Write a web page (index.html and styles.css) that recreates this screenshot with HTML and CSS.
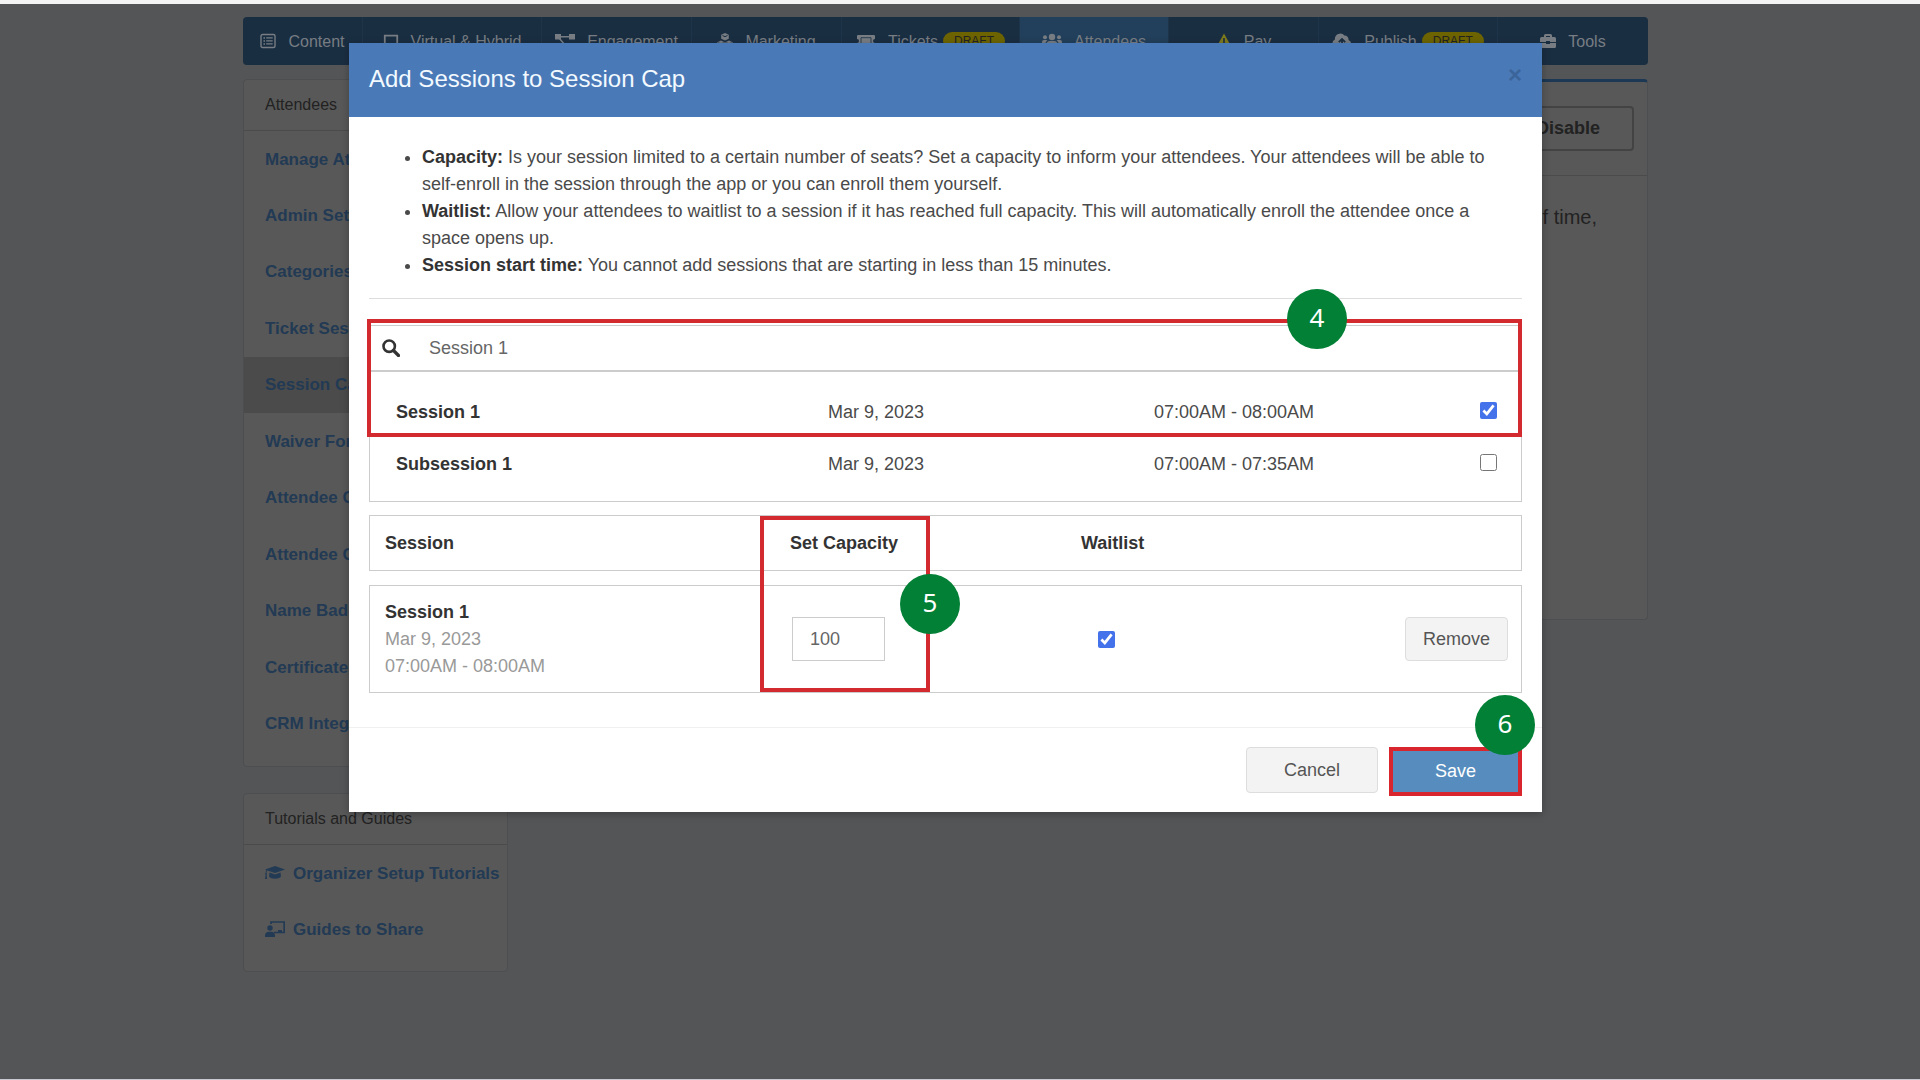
FILE: index.html
```html
<!DOCTYPE html>
<html lang="en">
<head>
<meta charset="utf-8">
<meta name="viewport" content="width=device-width, initial-scale=1">
<title>Session Cap</title>
<link rel="stylesheet" href="styles.css">
</head>
<body>
<div class="page">
  <nav class="topnav" aria-label="Event">
    <a href="#"><svg class="icon" viewBox="0 0 16 16"><rect x="1" y="1.500" width="14" height="13" rx="1.500" fill="none" stroke="currentColor" stroke-width="1.400"/><path d="M3.500 4.200h1.500v1.500H3.500zM3.500 7.200h1.500v1.500H3.500zM3.500 10.200h1.500v1.500H3.500zM6.200 4.200h6.500v1.400H6.200zM6.200 7.200h6.500v1.400H6.200zM6.200 10.200h6.500v1.400H6.200z" fill="currentColor"/></svg>Content</a>
    <a href="#"><svg class="icon" viewBox="0 0 18 16"><path d="M2 12V2h14v10" fill="none" stroke="currentColor" stroke-width="2"/><path d="M0 12.500h18v1a1.500 1.500 0 0 1-1.500 1.500h-15A1.500 1.500 0 0 1 0 13.500z" fill="currentColor"/></svg>Virtual &amp; Hybrid</a>
    <a href="#"><svg class="icon wide" viewBox="0 0 20 16"><path d="M0 1h6v5.500H0zM14 1h6v5.500h-6zM8 10h6v5.500H8z" fill="currentColor"/><path d="M5 3.700h10M4 5l6 7" stroke="currentColor" stroke-width="1.600"/></svg>Engagement</a>
    <a href="#"><svg class="icon" viewBox="0 0 16 16"><path d="M8 0l3.800 1.800v4L8 7.600 4.200 5.800v-4zM4 7.400l3.700 1.800v4L4 15.200.3 13.200v-4zM12 7.400l3.700 1.800v4l-3.700 2-3.700-2v-4z" fill="currentColor"/><path d="M5.500 2.500L8 3.700l2.500-1.200M1.500 9.800L4 11l2.500-1.200M9.500 9.800L12 11l2.500-1.200" fill="none" stroke="#1a2e42"/></svg>Marketing</a>
    <a href="#"><svg class="icon wide" viewBox="0 0 18 16"><path d="M1 2h16a1 1 0 0 1 1 1v3a2 2 0 0 0 0 4v3a1 1 0 0 1-1 1H1a1 1 0 0 1-1-1v-3a2 2 0 0 0 0-4V3a1 1 0 0 1 1-1z" fill="currentColor"/><path d="M4 4.700h10v6.600H4z" fill="none" stroke="#1a2e42" stroke-width=".8"/></svg>Tickets <span class="draft">DRAFT</span></a>
    <a href="#" class="current"><svg class="icon wide" viewBox="0 0 20 16"><circle cx="10" cy="4" r="3.200" fill="currentColor"/><circle cx="3" cy="4.300" r="2" fill="currentColor"/><circle cx="17" cy="4.300" r="2" fill="currentColor"/><path d="M4.500 14v-2.500A3.500 3.500 0 0 1 8 8h4a3.500 3.500 0 0 1 3.500 3.500V14zM0 10.500V9a2 2 0 0 1 2-2h2.500l.8.600a5 5 0 0 0-2 2.900zM20 10.500V9a2 2 0 0 0-2-2h-2.500l-.8.600a5 5 0 0 1 2 2.900z" fill="currentColor"/></svg>Attendees</a>
    <a href="#"><svg class="icon warn" viewBox="0 0 16 16"><path d="M8 .5L15.800 14.500H.2z" fill="currentColor"/><path d="M8 5v5M8 11v2" stroke="#1a2e42" stroke-width="1.600"/></svg>Pay</a>
    <a href="#"><svg class="icon wide" viewBox="0 0 20 16"><path d="M16.500 7a4 4 0 0 0-4-4.500 5.500 5.500 0 0 0-9.600 4A4.500 4.500 0 0 0 4.500 15H16a4.200 4.200 0 0 0 .5-8z" fill="currentColor"/><path d="M10 13V7M6.800 9.200L10 6l3.200 3.200" fill="none" stroke="#1a2e42" stroke-width="1.800"/></svg>Publish <span class="draft">DRAFT</span></a>
    <a href="#"><svg class="icon" viewBox="0 0 16 16"><path d="M4 4V2.500A1.500 1.500 0 0 1 5.500 1h5A1.500 1.500 0 0 1 12 2.500V4h2.500A1.500 1.500 0 0 1 16 5.500V9h-6V8H6v1H0V5.500A1.500 1.500 0 0 1 1.500 4zm2 0h4V3H6zM0 10h6v1h4v-1h6v3.500a1.500 1.500 0 0 1-1.500 1.500h-13A1.500 1.500 0 0 1 0 13.500z" fill="currentColor" fill-rule="evenodd"/></svg>Tools</a>
  </nav>
  <div class="columns">
    <aside class="side">
      <section class="card">
        <h2>Attendees</h2>
        <ul class="menu menu-main">
          <li><a href="#">Manage Attendees</a></li>
          <li><a href="#">Admin Settings</a></li>
          <li><a href="#">Categories</a></li>
          <li><a href="#">Ticket Sessions</a></li>
          <li class="selected"><a href="#">Session Cap</a></li>
          <li><a href="#">Waiver Forms</a></li>
          <li><a href="#">Attendee Chat</a></li>
          <li><a href="#">Attendee Groups</a></li>
          <li><a href="#">Name Badges</a></li>
          <li><a href="#">Certificates</a></li>
          <li><a href="#">CRM Integration</a></li>
        </ul>
      </section>
      <section class="card">
        <h2>Tutorials and Guides</h2>
        <ul class="menu">
          <li><a href="#"><svg class="icon wide" viewBox="0 0 20 16"><path d="M10 1l10 3.500L10 8 2.500 5.400c-.8.700-1 1.500-1 2.600.8.500.7 1.300.1 1.700L2.200 14H0l.6-4.300C0 9.200 0 8.400.6 8c0-1.200.3-2.200.9-3L0 4.500z" fill="currentColor"/><path d="M4.500 7.500L10 9.400l5.500-1.900.5 4c-2 3-10 3-12 0z" fill="currentColor"/></svg>Organizer Setup Tutorials</a></li>
          <li><a href="#"><svg class="icon wide" viewBox="0 0 20 16"><path d="M6 3V1h13.200v10.500H9" fill="none" stroke="currentColor" stroke-width="1.700"/><path d="M13 11v-2h4v2z" fill="currentColor"/><circle cx="5" cy="7" r="2.700" fill="currentColor"/><path d="M0 16v-1.500A4 4 0 0 1 4 10.800h2A4 4 0 0 1 10 14.500V16z" fill="currentColor"/></svg>Guides to Share</a></li>
        </ul>
      </section>
    </aside>
    <main class="main card">
      <div class="main-head"><button type="button" class="disable">Disable</button></div>
      <p class="main-text">of time,</p>
    </main>
  </div>
</div>

<div class="overlay">
  <div class="modal" role="dialog" aria-modal="true" aria-labelledby="modal-title">
    <header class="modal-head">
      <h1 id="modal-title">Add Sessions to Session Cap</h1>
      <button type="button" class="close" aria-label="Close">×</button>
    </header>
    <div class="modal-body">
      <ul class="notes">
        <li><b>Capacity:</b> Is your session limited to a certain number of seats? Set a capacity to inform your attendees. Your attendees will be able to self-enroll in the session through the app or you can enroll them yourself.</li>
        <li><b>Waitlist:</b> Allow your attendees to waitlist to a session if it has reached full capacity. This will automatically enroll the attendee once a space opens up.</li>
        <li><b>Session start time:</b> You cannot add sessions that are starting in less than 15 minutes.</li>
      </ul>
      <hr>
      <div class="picker">
        <label class="search">
          <svg class="icon" viewBox="0 0 18 18"><circle cx="7.200" cy="7.200" r="5.700" fill="none" stroke="currentColor" stroke-width="2.600"/><path d="M11.500 11.500l5 5" stroke="currentColor" stroke-width="3.200" stroke-linecap="round"/></svg>
          <input type="text" value="Session 1" aria-label="Search sessions">
        </label>
        <table class="results">
          <tr><th scope="row">Session 1</th><td>Mar 9, 2023</td><td>07:00AM - 08:00AM</td><td class="tick"><input type="checkbox" checked aria-label="Add Session 1"></td></tr>
          <tr><th scope="row">Subsession 1</th><td>Mar 9, 2023</td><td>07:00AM - 07:35AM</td><td class="tick"><input type="checkbox" aria-label="Add Subsession 1"></td></tr>
        </table>
        <div class="mark mark-search"></div>
        <span class="step step-4">4</span>
      </div>
      <div class="chosen">
        <table>
          <thead><tr><th class="c-session">Session</th><th class="c-cap">Set Capacity</th><th class="c-wait">Waitlist</th><th></th></tr></thead>
          <tbody><tr>
            <td><b>Session 1</b><br><span class="when">Mar 9, 2023<br>07:00AM - 08:00AM</span></td>
            <td><input type="text" class="capacity" value="100" aria-label="Capacity"></td>
            <td class="wait"><input type="checkbox" checked aria-label="Waitlist"></td>
            <td class="action"><button type="button" class="btn remove">Remove</button></td>
          </tr></tbody>
        </table>
        <div class="mark mark-cap"></div>
        <span class="step step-5">5</span>
      </div>
    </div>
    <footer class="modal-foot">
      <button type="button" class="btn">Cancel</button>
      <div class="save-wrap"><button type="button" class="btn save">Save</button><span class="step step-6">6</span></div>
    </footer>
  </div>
</div>
</body>
</html>
```
FILE: styles.css
```css
* { box-sizing: border-box; }

body {
  margin: 0;
  min-height: 100vh;
  padding: 13px 29px 0 0;
  border-top: 4px solid #f4f4f4;
  border-bottom: 1px solid #c9c9d2;
  background: #545557;
  color: #4a4a4a;
  font: 18px/27px "Liberation Sans", Arial, sans-serif;
}

a { color: inherit; text-decoration: none; }
h1, h2, ul, p { margin: 0; padding: 0; }
button, input { font: inherit; }

.icon { width: 16px; height: 16px; flex: none; }
.icon.wide { width: 20px; }

.page { max-width: 1405px; margin: 0 auto; }

/* Navigation bar */
.topnav {
  display: grid;
  grid-template-columns: 120fr 179fr 150fr 150fr 178fr 149fr 150fr 179fr 150fr;
  height: 48px;
  border-radius: 4px;
  overflow: hidden;
  background: #1a2e42;
  color: #777d83;
  font-size: 16px;
}
.topnav a {
  display: flex;
  align-items: center;
  justify-content: center;
  gap: 12px;
  white-space: nowrap;
  border-right: 1px solid #1e3549;
}
.topnav a:last-child { border-right: 0; }
.topnav .current { background: #223f5b; }
.topnav .warn { color: #7f7a1c; }
.draft {
  margin-left: -7px;
  padding: 0 11px;
  border-radius: 9px;
  background: #6d6400;
  color: #222;
  font-size: 12px;
  line-height: 18px;
}

/* Page behind the dialog */
.columns { display: flex; align-items: flex-start; gap: 24px; margin-top: 14px; }
.side { width: 265px; flex: none; }
.card { border: 1px solid #4d4e50; border-radius: 4px; background: #585858; }
.side .card + .card { margin-top: 26px; }
.card h2 {
  padding: 0 21px;
  border-bottom: 1px solid #4b4b4b;
  color: #222;
  font-size: 16px;
  font-weight: 400;
  line-height: 50px;
}
.menu { list-style: none; padding-bottom: 14px; color: #223a54; font-size: 17px; font-weight: 700; }
.menu-main { display: grid; grid-auto-rows: 1fr; min-height: 635px; }
.menu a { display: flex; align-items: center; gap: 8px; height: 56px; padding-left: 21px; white-space: nowrap; }
.menu .selected { background: #4b4b4b; }
.main { flex: 1; min-height: 541px; border-top: 3px solid #1c3854; }
.main-head { display: flex; justify-content: flex-end; padding: 24px 13px; border-bottom: 1px solid #4b4b4b; }
.disable {
  height: 45px;
  padding: 0 32px;
  border: 2px solid #434343;
  border-radius: 4px;
  background: #585858;
  color: #222;
  font-weight: 700;
}
.main-text { padding: 28px 50px; color: #222; font-size: 20px; text-align: right; }

/* Dialog */
.overlay { position: absolute; inset: 43px 29px auto 0; display: flex; justify-content: center; }
.modal { width: 1193px; max-width: 100%; background: #fff; box-shadow: 0 2px 8px #0004; }
.modal-head {
  display: flex;
  align-items: flex-start;
  justify-content: space-between;
  height: 74px;
  padding: 20px;
  background: #4a79b7;
}
.modal-head h1 { color: #f2f9ff; font-size: 24px; font-weight: 400; line-height: 32px; }
.close { padding: 0; border: 0; background: none; color: #3a649a; font-size: 24px; font-weight: 700; line-height: 24px; }
.modal-body { padding: 27px 20px 20px; }
.notes { padding-left: 53px; }
.notes b, th, td b { color: #333; }
hr { height: 1px; margin: 19px 0 26px; border: 0; background: #ddd; }

.picker, .chosen, .save-wrap { position: relative; }
.picker { border: 1px solid #ccc; }
.search { display: flex; align-items: center; gap: 29px; height: 46px; padding-left: 12px; border-bottom: 2px solid #ccc; color: #333; }
.search .icon { width: 18px; height: 18px; }
.search input { flex: 1; min-width: 0; padding: 0; border: 0; outline: 0; background: none; color: #666; }
table { width: 100%; border-spacing: 0; table-layout: fixed; }
th { text-align: left; }
.results { margin: 14px 0 11px; }
.results th, .results td { height: 52px; padding: 0; }
.results th { width: 458px; padding-left: 26px; }
.results td:nth-child(2) { width: 326px; }
.results .tick { padding: 0 24px 5px 0; text-align: right; }
input[type="checkbox"] { width: 17px; height: 17px; margin: 0; vertical-align: middle; accent-color: #4472ea; }

.chosen { display: flow-root; margin-top: 13px; }
.chosen table { border-spacing: 0 14px; margin: -14px 0; }
.chosen th, .chosen td { padding: 0; border: solid #ccc; border-width: 1px 0; }
.chosen th { height: 56px; }
.chosen td { height: 108px; }
.chosen th:first-child, .chosen td:first-child { padding-left: 15px; border-left-width: 1px; }
.chosen th:last-child, .chosen td:last-child { padding-right: 13px; border-right-width: 1px; }
.c-session { width: 421px; }
.c-cap { width: 291px; }
.when { color: #999; }
.capacity { width: 93px; height: 44px; margin-left: 2px; padding: 0 17px; border: 1px solid #ccc; color: #666; }
.chosen .wait { padding-left: 17px; }
.action { text-align: right; }

.btn { height: 46px; width: 132px; border: 1px solid #ddd; border-radius: 4px; background: #f3f3f3; color: #555; }
.btn.remove { width: 103px; height: 44px; }
.modal-foot { display: flex; justify-content: flex-end; gap: 11px; margin-top: 14px; padding: 19px 20px 16px; border-top: 1px solid #f0f0f0; }
.btn.save { width: 133px; height: 49px; border: 4px solid #d9262e; border-radius: 0; background: #568dbe; color: #fff; }

/* Walkthrough callouts */
.mark { position: absolute; border: 4px solid #d22a2e; pointer-events: none; }
.mark-search { inset: -7px -1px auto -3px; height: 118px; }
.mark-cap { inset: 1px auto 1px 391px; width: 170px; }
.step {
  position: absolute;
  width: 60px;
  height: 60px;
  border-radius: 50%;
  background: #028036;
  color: #fff;
  font: 26px/57px "Noto Sans", sans-serif;
  text-align: center;
}
.step-4 { top: -37px; right: 174px; }
.step-5 { top: 59px; left: 531px; }
.step-6 { top: -52px; right: -13px; }
```
